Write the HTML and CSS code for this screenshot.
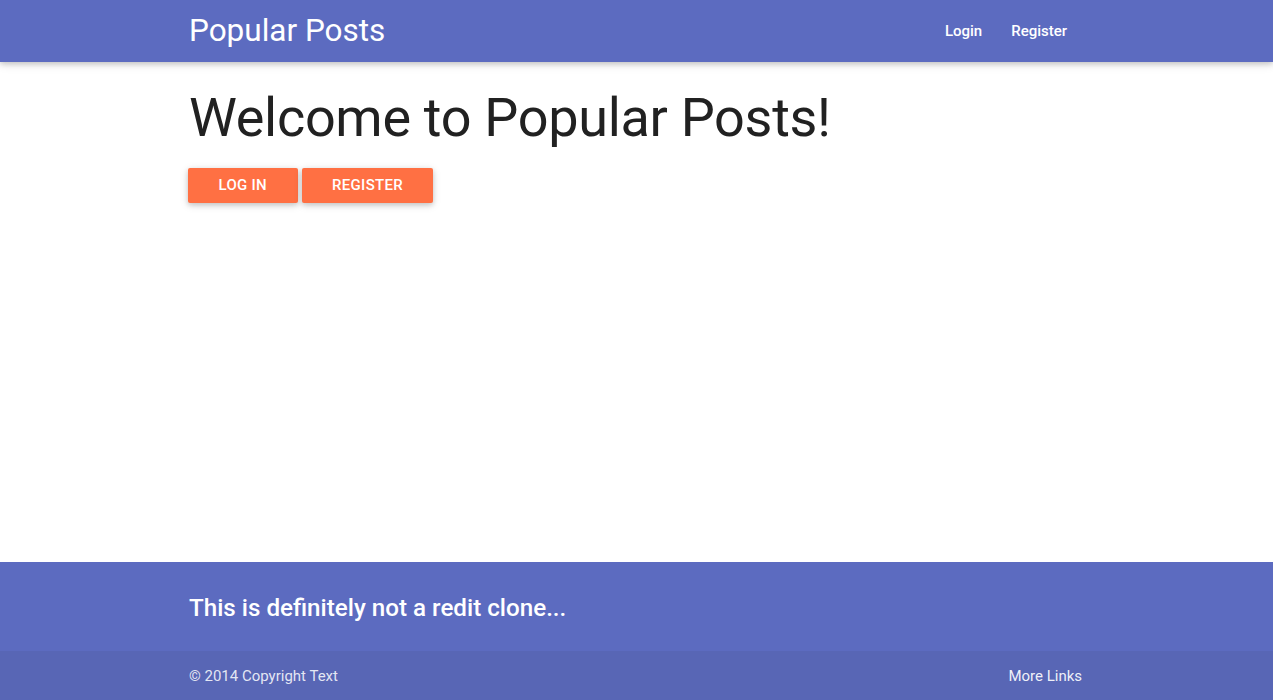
FILE: index.html
```html
<!DOCTYPE html>
<html lang="en">
<head>
<meta charset="utf-8">
<title>Popular Posts</title>
<link rel="stylesheet" href="styles.css">
</head>
<body>
<header class="navbar">
  <div class="container nav-inner">
    <a class="brand" href="#">Popular Posts</a>
    <ul class="nav-links">
      <li><a href="#">Login</a></li>
      <li><a href="#">Register</a></li>
    </ul>
  </div>
</header>
<main class="main">
  <div class="container">
    <h1 class="title">Welcome to Popular Posts!</h1>
    <div class="actions">
      <a class="btn" href="#">Log in</a>
      <a class="btn" href="#">Register</a>
    </div>
  </div>
</main>
<footer class="footer">
  <div class="container footer-top">
    <h5 class="footer-title">This is definitely not a redit clone...</h5>
  </div>
  <div class="copyright">
    <div class="container copyright-inner">
      <span class="copy-text">© 2014 Copyright Text</span>
      <a href="#" class="more">More Links</a>
    </div>
  </div>
</footer>
</body>
</html>
```

FILE: styles.css
```css
* { box-sizing: border-box; }
html, body { margin: 0; padding: 0; }
body {
  font-family: Roboto, "Liberation Sans", sans-serif;
  color: rgba(0,0,0,0.87);
  min-height: 100vh;
  display: flex;
  flex-direction: column;
  background: #fff;
}
a { text-decoration: none; color: inherit; }
.container {
  width: 70%;
  margin: 0 auto;
}
.navbar {
  background: #5c6bc0;
  height: 62px;
  color: #fff;
  box-shadow: 0 2px 5px 0 rgba(0,0,0,0.16), 0 2px 10px 0 rgba(0,0,0,0.12);
  position: relative;
  z-index: 2;
}
.nav-inner {
  height: 100%;
  display: flex;
  align-items: center;
  justify-content: space-between;
}
.brand {
  font-size: 31.5px;
  color: #fff;
  line-height: 58px;
  margin-left: -2px;
}
.nav-links {
  list-style: none;
  display: flex;
  margin: 0;
  padding: 0;
}
.nav-links a {
  display: block;
  padding: 0 15px;
  font-size: 15px;
  font-weight: 500;
  line-height: 58px;
  color: #fff;
}
.nav-links li:first-child a { padding-right: 14px; }
.main { flex: 1; }
.title {
  font-size: 54px;
  font-weight: 400;
  letter-spacing: -0.3px;
  line-height: 59.4px;
  margin: 25.5px 0 21px -2px;
  color: #212121;
}
.actions {
  display: flex;
  gap: 4px;
  margin-left: -3px;
}
.btn {
  display: inline-block;
  height: 35.5px;
  line-height: 35.5px;
  padding: 0 30.5px;
  background: #ff7043;
  color: #fff;
  text-transform: uppercase;
  font-size: 15px;
  font-weight: 500;
  letter-spacing: 0.3px;
  border-radius: 2px;
  box-shadow: 0 2px 5px 0 rgba(0,0,0,0.16), 0 2px 10px 0 rgba(0,0,0,0.12);
}
.footer {
  background: #5c6bc0;
  color: #fff;
}
.footer-top {
  height: 89px;
  display: flex;
  align-items: center;
}
.footer-title {
  font-size: 24.2px;
  font-weight: 500;
  margin: 2px 0 0 -2px;
}
.copyright {
  background: rgba(51,51,51,0.08);
  height: 49px;
  color: rgba(255,255,255,0.85);
  font-size: 15px;
}
.copyright-inner {
  height: 100%;
  display: flex;
  align-items: center;
  justify-content: space-between;
}
.copy-text { margin-left: -2px; }
.more { color: rgba(255,255,255,0.92); }
```
